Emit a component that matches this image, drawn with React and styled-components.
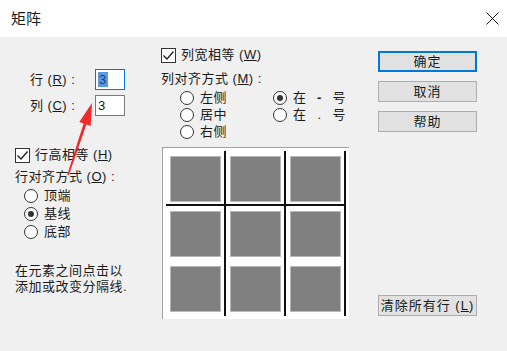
import React from "react";
import styled, { createGlobalStyle } from "styled-components";

const Global = createGlobalStyle`
  html, body { margin: 0; padding: 0; background: #f0f0f0; }
  body {
    font-family: "Liberation Sans", "Noto Sans CJK SC", sans-serif;
    color: #1a1a1a;
  }
`;

const Window = styled.div`
  position: relative;
  width: 507px;
  height: 351px;
  display: flex;
  flex-direction: column;
  overflow: hidden;
  background: #f0f0f0;
`;

const TitleBar = styled.div`
  height: 37px;
  flex: none;
  background: #fff;
  display: flex;
  align-items: center;
  justify-content: space-between;
  padding: 0 8px 0 11px;
  box-sizing: border-box;
`;

const Title = styled.span`
  font-size: 15px;
  line-height: 1;
`;

const Body = styled.div`
  flex: 1;
  display: flex;
  padding-left: 15px;
  font-size: 13px;
  letter-spacing: 0.5px;
`;

const LeftCol = styled.div`
  width: 146px;
  display: flex;
  flex-direction: column;
`;

const MidCol = styled.div`
  width: 217px;
  display: flex;
  flex-direction: column;
  padding-top: 10px;
`;

const RightCol = styled.div`
  width: 99px;
  display: flex;
  flex-direction: column;
  padding-top: 14px;
  gap: 9px;
`;

const Fields = styled.div`
  margin-top: 32px;
  padding-left: 15px;
  display: flex;
  flex-direction: column;
  gap: 5px;
`;

const Field = styled.div`
  display: flex;
  align-items: center;
  height: 21px;
`;

const FieldLabel = styled.span`
  width: 65px;
  line-height: 16px;
`;

const NumInput = styled.div`
  width: 30px;
  height: 21px;
  box-sizing: border-box;
  background: #fff;
  border: 1px solid ${(p) => (p.$focused ? "#0078d7" : "#7a7a7a")};
  display: flex;
  align-items: center;
  padding-left: 2px;
  font-size: 13px;
`;

const Selected = styled.span`
  background: #5c9ae0;
  color: #1b3c8a;
  line-height: 15px;
  padding: 0 1px;
`;

const Key = styled.span`
  text-decoration: underline;
`;

const Line = styled.div`
  height: ${(p) => p.$h || 16}px;
  line-height: ${(p) => p.$h || 16}px;
  margin-top: ${(p) => p.$mt || 0}px;
  display: flex;
  align-items: center;
  white-space: pre;
`;

const Box = styled.span`
  width: 15px;
  height: 15px;
  box-sizing: border-box;
  border: 1px solid #333;
  background: #fff;
  margin-right: 5px;
  display: flex;
  align-items: center;
  justify-content: center;
  flex: none;
`;

const Radios = styled.div`
  display: grid;
  grid-template-columns: ${(p) => p.$cols || "auto"};
  grid-auto-flow: column;
  grid-template-rows: repeat(3, ${(p) => p.$row}px);
  line-height: ${(p) => p.$row}px;
  margin-top: ${(p) => p.$mt}px;
  padding-left: ${(p) => p.$indent}px;
`;

const Radio = styled.div`
  display: flex;
  align-items: center;
  white-space: pre;
`;

const Dot = styled.span`
  width: 14px;
  height: 14px;
  box-sizing: border-box;
  border-radius: 50%;
  border: 1px solid #333;
  background: #fff;
  margin-right: 6px;
  display: flex;
  align-items: center;
  justify-content: center;
  flex: none;

  &::after {
    content: "";
    width: 6px;
    height: 6px;
    border-radius: 50%;
    background: ${(p) => (p.$on ? "#333" : "transparent")};
  }
`;

const Sep = styled.span`
  display: inline-block;
  width: 26px;
  text-align: center;
  font-weight: ${(p) => (p.$bold ? 700 : 400)};
`;

const Help = styled.div`
  margin-top: 22px;
  line-height: 16px;
`;

const Preview = styled.div`
  margin-top: 7px;
  margin-left: 1px;
  width: 187px;
  height: 172px;
  box-sizing: border-box;
  background: #fff;
  border-left: 1px solid #a0a0a0;
  border-top: 1px solid #a0a0a0;
  padding: 3px 0 0 3px;
`;

const Grid = styled.div`
  display: grid;
  grid-template-columns: repeat(3, 60px);
  grid-template-rows: repeat(3, 55px);
`;

const Slot = styled.div`
  box-sizing: border-box;
  border-right: 2px solid #111;
  border-bottom: ${(p) => (p.$split ? "2px solid #111" : "0")};
  padding: 5px 0 0 4px;
`;

const Cell = styled.div`
  width: 51px;
  height: 46px;
  box-sizing: border-box;
  background: #808080;
  border: 1px solid #b8b8b8;
`;

const Button = styled.div`
  height: 21px;
  box-sizing: border-box;
  background: #e1e1e1;
  border: ${(p) => (p.$default ? "2px solid #0078d7" : "1px solid #adadad")};
  display: flex;
  align-items: center;
  justify-content: center;
  line-height: 1;
  margin-top: ${(p) => p.$mt || 0}px;
  letter-spacing: 1px;
`;

const Arrow = styled.svg`
  position: absolute;
  left: 0;
  top: 0;
  pointer-events: none;
`;

const Check = () => (
  <svg width="13" height="13" viewBox="0 0 13 13">
    <path d="M1.5 6.5 L5 10 L11.5 2.5" fill="none" stroke="#222" strokeWidth="1.4" />
  </svg>
);

export default function App() {
  return (
    <Window>
      <Global />
      <TitleBar>
        <Title>矩阵</Title>
        <svg width="13" height="13" viewBox="0 0 13 13">
          <path d="M0.5 0.5 L12.5 12.5 M12.5 0.5 L0.5 12.5" stroke="#111" strokeWidth="1" />
        </svg>
      </TitleBar>
      <Body>
        <LeftCol>
          <Fields>
            <Field>
              <FieldLabel>行 (<Key>R</Key>) :</FieldLabel>
              <NumInput $focused>
                <Selected>3</Selected>
              </NumInput>
            </Field>
            <Field>
              <FieldLabel>列 (<Key>C</Key>) :</FieldLabel>
              <NumInput>3</NumInput>
            </Field>
          </Fields>
          <Line $mt={31}>
            <Box>
              <Check />
            </Box>
            行高相等 (<Key>H</Key>)
          </Line>
          <Line $mt={6}>
            行对齐方式 (<Key>O</Key>) :
          </Line>
          <Radios $row={18} $mt={2} $indent={9}>
            <Radio><Dot />顶端</Radio>
            <Radio><Dot $on />基线</Radio>
            <Radio><Dot />底部</Radio>
          </Radios>
          <Help>
            <div>在元素之间点击以</div>
            <div>添加或改变分隔线.</div>
          </Help>
        </LeftCol>
        <MidCol>
          <Line>
            <Box>
              <Check />
            </Box>
            列宽相等 (<Key>W</Key>)
          </Line>
          <Line $mt={8}>
            列对齐方式 (<Key>M</Key>) :
          </Line>
          <Radios $row={17} $mt={2} $indent={19} $cols="93px auto">
            <Radio><Dot />左侧</Radio>
            <Radio><Dot />居中</Radio>
            <Radio><Dot />右侧</Radio>
            <Radio><Dot $on />在<Sep $bold>-</Sep>号</Radio>
            <Radio><Dot />在<Sep>.</Sep>号</Radio>
          </Radios>
          <Preview>
            <Grid>
              {Array.from({ length: 9 }).map((_, i) => (
                <Slot key={i} $split={i < 3}>
                  <Cell />
                </Slot>
              ))}
            </Grid>
          </Preview>
        </MidCol>
        <RightCol>
          <Button $default>确定</Button>
          <Button>取消</Button>
          <Button>帮助</Button>
          <Button $mt={154}>
            清除所有行 (<Key>L</Key>)
          </Button>
        </RightCol>
      </Body>
      <Arrow width="507" height="351">
        <polygon
          points="92,103 79.3,122.1 83.6,123.5 67.2,174.7 68.8,175.3 86.4,124.5 90.7,125.9"
          fill="#f02a2a"
        />
      </Arrow>
    </Window>
  );
}
